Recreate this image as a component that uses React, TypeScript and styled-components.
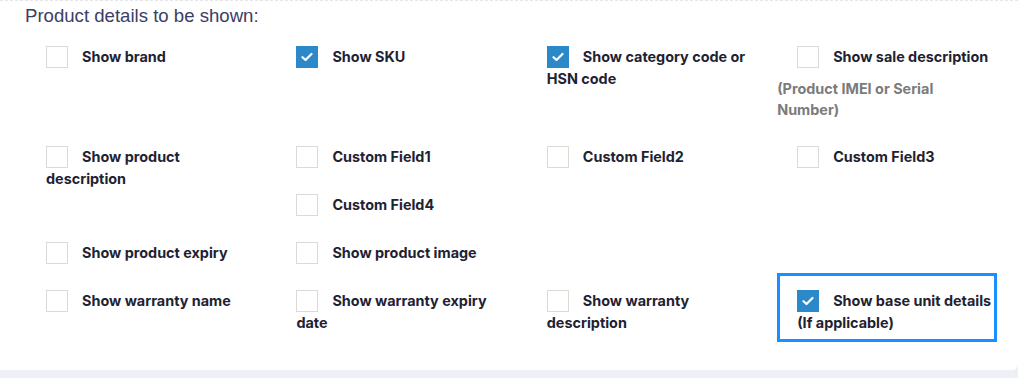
import React from "react";
import styled, { createGlobalStyle } from "styled-components";

const Global = createGlobalStyle`
  html, body {
    margin: 0;
    padding: 0;
    background: #ffffff;
  }
`;

type Opt = {
  label: string;
  checked?: boolean;
  note?: string;
  col: number;
  row: string;
  highlight?: boolean;
};

const options: Opt[] = [
  { label: "Show brand", col: 1, row: "1" },
  { label: "Show SKU", checked: true, col: 2, row: "1" },
  { label: "Show category code or HSN code", checked: true, col: 3, row: "1" },
  {
    label: "Show sale description",
    note: "(Product IMEI or Serial Number)",
    col: 4,
    row: "1",
  },
  { label: "Show product description", col: 1, row: "2 / span 2" },
  { label: "Custom Field1", col: 2, row: "2" },
  { label: "Custom Field2", col: 3, row: "2" },
  { label: "Custom Field3", col: 4, row: "2" },
  { label: "Custom Field4", col: 2, row: "3" },
  { label: "Show product expiry", col: 1, row: "4" },
  { label: "Show product image", col: 2, row: "4" },
  { label: "Show warranty name", col: 1, row: "5" },
  { label: "Show warranty expiry date", col: 2, row: "5" },
  { label: "Show warranty description", col: 3, row: "5" },
  {
    label: "Show base unit details (If applicable)",
    checked: true,
    col: 4,
    row: "5",
    highlight: true,
  },
];

export default function App() {
  return (
    <>
      <Global />
      <Shelf>
        <Card>
          <Title>Product details to be shown:</Title>
          <Grid>
            {options.map((o) => (
              <Cell key={o.label} $col={o.col} $row={o.row}>
                {o.highlight ? (
                  <Highlight>
                    <Option {...o} />
                  </Highlight>
                ) : (
                  <Option {...o} />
                )}
              </Cell>
            ))}
          </Grid>
        </Card>
      </Shelf>
    </>
  );
}

function Option({ label, checked, note }: Opt) {
  return (
    <>
      <Label>
        <Box $checked={!!checked}>
          {checked && (
            <svg width="12" height="10" viewBox="0 0 12 10">
              <polyline
                points="1.5,5.2 4.5,8 10.5,2"
                fill="none"
                stroke="#ffffff"
                strokeWidth="2.2"
                strokeLinecap="round"
                strokeLinejoin="round"
              />
            </svg>
          )}
        </Box>
        {label}
      </Label>
      {note && <Note>{note}</Note>}
    </>
  );
}

const Shelf = styled.div`
  width: 1018px;
  background: #edf0f4;
  padding-bottom: 8px;
`;

const Card = styled.div`
  background: #ffffff;
  height: 370px;
  box-sizing: border-box;
  border-top: 1px dashed #e6e6e6;
  border-radius: 0 0 6px 0;
  padding: 4px 0 0 25px;
`;

const Title = styled.div`
  font-family: "Liberation Sans", Arial, sans-serif;
  font-size: 18.6px;
  line-height: 22px;
  color: #3a3e66;
`;

const Grid = styled.div`
  display: grid;
  grid-template-columns: repeat(4, 250.4px);
  grid-template-rows: 74px 22px 22px 22px auto;
  row-gap: 26px;
  margin: 19px 0 0 21px;
`;

const Cell = styled.div<{ $col: number; $row: string }>`
  grid-column: ${(p) => p.$col};
  grid-row: ${(p) => p.$row};
  padding-right: 42px;
  font-family: Inter, "Liberation Sans", sans-serif;
  font-weight: 700;
  font-size: 14.4px;
  line-height: 22px;
`;

const Highlight = styled.div`
  width: 220px;
  box-sizing: border-box;
  margin: -17px 0 0 -20px;
  padding: 14px 0 5px 17px;
  border: 3px solid #1a8fff;
`;

const Label = styled.div`
  color: #1e2232;
`;

const Box = styled.span<{ $checked: boolean }>`
  display: inline-flex;
  align-items: center;
  justify-content: center;
  width: 22px;
  height: 22px;
  box-sizing: border-box;
  vertical-align: top;
  margin-right: 14px;
  background: ${(p) => (p.$checked ? "#2b88c9" : "#ffffff")};
  border: 1px solid ${(p) => (p.$checked ? "#2b88c9" : "#dcdad5")};
`;

const Note = styled.div`
  width: 185px;
  margin: 10px 0 0 -20px;
  line-height: 21px;
  color: #7b7b7b;
`;
